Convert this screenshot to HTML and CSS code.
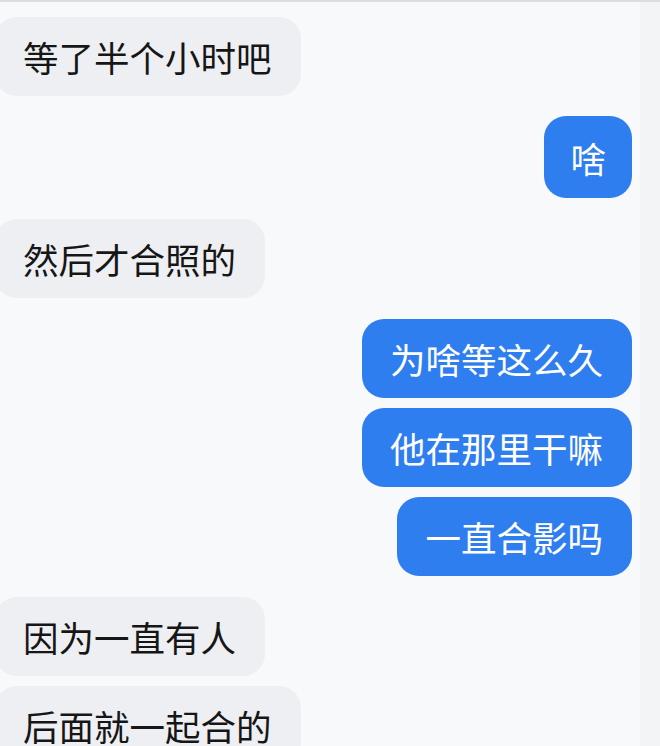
FILE: index.html
```html
<!DOCTYPE html>
<html lang="zh-CN">
<head>
  <meta charset="UTF-8">
  <title>聊天记录</title>
  <meta name="viewport" content="width=device-width, initial-scale=1">
  <link rel="stylesheet" href="styles.css">
</head>

<body>

  <!-- 聊天记录 -->
  <div class="chat">
    <div class="row left"><div class="bubble">等了半个小时吧</div></div>
    <div class="row right single"><div class="bubble">啥</div></div>
    <div class="row left"><div class="bubble">然后才合照的</div></div>
    <div class="row right"><div class="bubble">为啥等这么久</div></div>
    <div class="row right grouped"><div class="bubble">他在那里干嘛</div></div>
    <div class="row right grouped"><div class="bubble">一直合影吗</div></div>
    <div class="row left"><div class="bubble">因为一直有人</div></div>
    <div class="row left grouped"><div class="bubble">后面就一起合的</div></div>
  </div>

</body>
</html>
```

FILE: styles.css
```css
html, body {
  margin: 0;
  height: 100%;
}

body {
  font-family: "Noto Sans CJK SC", "Noto Sans", sans-serif;
  background: linear-gradient(to right, #f8f9fb 640px, #f3f4f6 640px);
  border-top: 2px solid #dcdde1;
  box-sizing: border-box;
  overflow: hidden;
}

.chat {
  display: flex;
  flex-direction: column;
  padding: 15px 28px 0 0;
}

.row {
  display: flex;
  margin-top: 21px;
}

.row:first-child {
  margin-top: 0;
}

.row.grouped {
  margin-top: 10px;
}

.row.single {
  margin-top: 20px;
}

.row.left {
  justify-content: flex-start;
}

.row.right {
  justify-content: flex-end;
}

/* Balões */
.bubble {
  font-size: 35.5px;
  line-height: 45px;
  padding: 17px 29px 17px 28px;
  border-radius: 22px;
  white-space: nowrap;
}

.single .bubble {
  padding: 18.5px 26px;
}

.left .bubble {
  background: #eeeff2;
  color: #161616;
  margin-left: -5px;
}

.right .bubble {
  background: #2e7ef0;
  color: #fff;
}
```
